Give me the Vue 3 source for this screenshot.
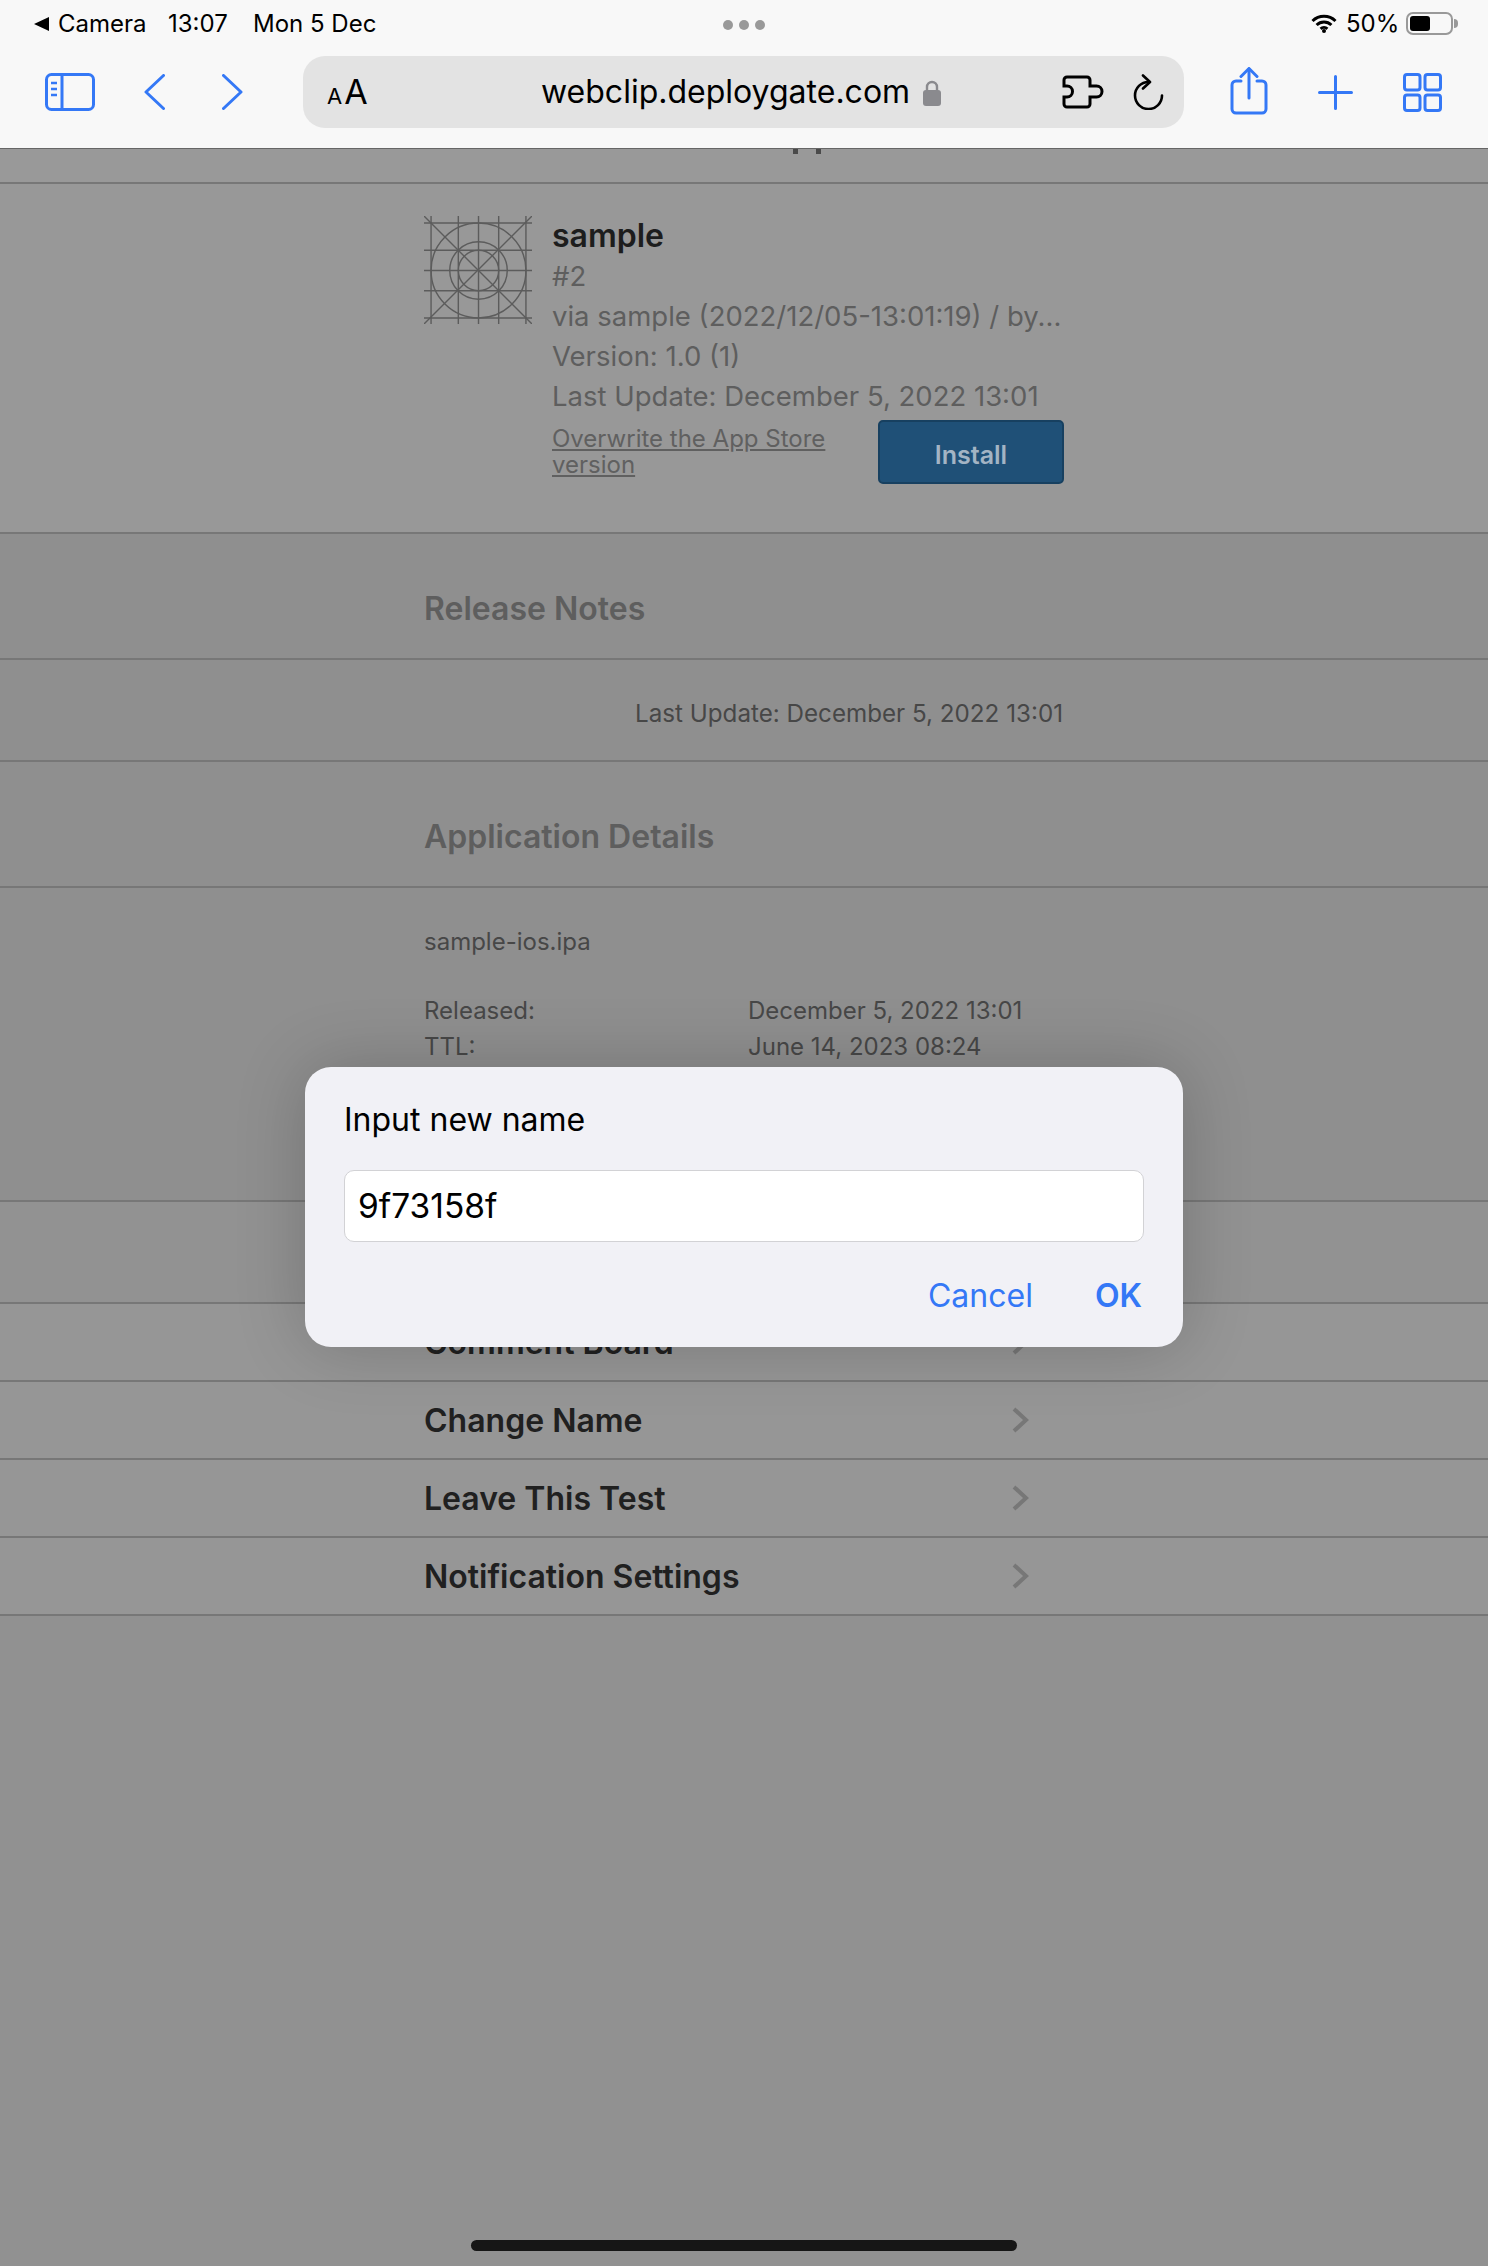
<script setup>
const rows = ['Comment Board', 'Change Name', 'Leave This Test', 'Notification Settings']
</script>

<template>
  <div class="screen">
    <header class="topbar">
      <div class="status">
        <span class="back-tri"></span>
        <span class="st camera">Camera</span>
        <span class="st time">13:07</span>
        <span class="st date">Mon 5 Dec</span>
        <span class="dots"><i></i><i></i><i></i></span>
        <svg class="wifi" viewBox="0 0 26 19" fill="none" stroke="#000" stroke-width="3">
          <path d="M1.5 7A16.5 16.5 0 0 1 24.5 7" />
          <path d="M5.6 11A10.6 10.6 0 0 1 20.4 11" />
          <path d="M9.6 14.8A5 5 0 0 1 16.4 14.8" />
          <circle cx="13" cy="17" r="2" fill="#000" stroke="none" />
        </svg>
        <span class="st pct">50%</span>
        <span class="battery"><span class="fill"></span></span>
        <span class="tip"></span>
      </div>
      <div class="tools">
        <svg class="ic-side" viewBox="0 0 50 38" fill="none" stroke="#3478f6" stroke-width="3">
          <rect x="1.5" y="1.5" width="47" height="35" rx="5" />
          <path d="M17 2V36" />
          <path d="M6 10H12M6 16H12M6 22H12" stroke-width="2.4" />
        </svg>
        <svg class="ic-back" viewBox="0 0 21 36" fill="none" stroke="#3478f6" stroke-width="3" stroke-linecap="round" stroke-linejoin="round">
          <path d="M19.5 1.5L2 18L19.5 34.5" />
        </svg>
        <svg class="ic-fwd" viewBox="0 0 21 36" fill="none" stroke="#3478f6" stroke-width="3" stroke-linecap="round" stroke-linejoin="round">
          <path d="M1.5 1.5L19 18L1.5 34.5" />
        </svg>
        <div class="url">
          <span class="aa"><small>A</small>A</span>
          <span class="host">webclip.deploygate.com</span>
          <svg class="lock" viewBox="0 0 18 26">
            <path d="M4 11V7a5 5 0 0 1 10 0v4" fill="none" stroke="#8a8a8e" stroke-width="2.4" />
            <rect x="0" y="10" width="18" height="16" rx="3" fill="#8a8a8e" />
          </svg>
          <svg class="puzzle" viewBox="0 0 42 34" fill="none" stroke="#000" stroke-width="3">
            <path d="M5 2H25a3 3 0 0 1 3 3v6h6.5a5.5 5.5 0 0 1 0 11H28v7a3 3 0 0 1-3 3H5a3 3 0 0 1-3-3v-7h3a5.5 5.5 0 0 0 0-11H2V5a3 3 0 0 1 3-3z" />
          </svg>
          <svg class="reload" viewBox="0 0 31 36" fill="none" stroke="#000" stroke-width="2.6" stroke-linecap="round" stroke-linejoin="round">
            <path d="M15.5 8A13.5 13.5 0 1 0 29 21.5" />
            <path d="M10 1.5L17 8L10 14.5" />
          </svg>
        </div>
        <svg class="ic-share" viewBox="0 0 38 48" fill="none" stroke="#3478f6" stroke-width="3" stroke-linecap="round" stroke-linejoin="round">
          <path d="M11 14H6a4 4 0 0 0-4 4v24a4 4 0 0 0 4 4h26a4 4 0 0 0 4-4V18a4 4 0 0 0-4-4h-5" />
          <path d="M19 31V2" />
          <path d="M11 9.5L19 1.5L27 9.5" />
        </svg>
        <svg class="ic-plus" viewBox="0 0 35 35" fill="none" stroke="#3478f6" stroke-width="3" stroke-linecap="round">
          <path d="M17.5 1.5V33.5M1.5 17.5H33.5" />
        </svg>
        <svg class="ic-tabs" viewBox="0 0 39 39" fill="none" stroke="#3478f6" stroke-width="3">
          <rect x="1.5" y="1.5" width="15.5" height="15.5" rx="2.5" />
          <rect x="22" y="1.5" width="15.5" height="15.5" rx="2.5" />
          <rect x="1.5" y="22" width="15.5" height="15.5" rx="2.5" />
          <rect x="22" y="22" width="15.5" height="15.5" rx="2.5" />
        </svg>
      </div>
    </header>

    <main>
      <div class="clipped"><i></i><i></i></div>

      <section class="app-row band-light">
        <div class="wrap app">
          <svg class="app-icon" viewBox="0 0 107 107" fill="none" stroke="#5c5c5c" stroke-width="1.4">
            <path d="M7 0V107M34 0V107M54 0V107M74 0V107M101 0V107" />
            <path d="M0 7H107M0 34H107M0 54H107M0 74H107M0 101H107" />
            <path d="M0 0L107 107M107 0L0 107" />
            <circle cx="54" cy="54" r="47" />
            <circle cx="54" cy="54" r="28.5" />
            <circle cx="54" cy="54" r="20" />
          </svg>
          <div class="info">
            <h2>sample</h2>
            <p>#2</p>
            <p>via sample (2022/12/05-13:01:19) / by...</p>
            <p>Version: 1.0 (1)</p>
            <p>Last Update: December 5, 2022 13:01</p>
            <div class="actions">
              <a class="overwrite">Overwrite the App Store version</a>
              <span class="install">Install</span>
            </div>
          </div>
        </div>
      </section>

      <section class="head-row">
        <div class="wrap"><h3>Release Notes</h3></div>
      </section>
      <section class="notes-row">
        <div class="wrap notes">Last Update: December 5, 2022 13:01</div>
      </section>
      <section class="head-row">
        <div class="wrap"><h3>Application Details</h3></div>
      </section>
      <section class="details-row">
        <div class="wrap">
          <div class="file">sample-ios.ipa</div>
          <dl>
            <dt>Released:</dt><dd>December 5, 2022 13:01</dd>
            <dt>TTL:</dt><dd>June 14, 2023 08:24</dd>
          </dl>
        </div>
      </section>
      <section class="blank-row"></section>
      <section v-for="r in rows" :key="r" class="link-row">
        <div class="wrap link">
          <span>{{ r }}</span>
          <svg class="chev" viewBox="0 0 17 26" fill="none" stroke="#777" stroke-width="4">
            <path d="M2 2L14 13L2 24" />
          </svg>
        </div>
      </section>
    </main>

    <div class="dialog">
      <div class="d-title">Input new name</div>
      <div class="d-input">9f73158f</div>
      <div class="d-btns">
        <span class="cancel">Cancel</span>
        <span class="ok">OK</span>
      </div>
    </div>

    <div class="home"></div>
  </div>
</template>

<style scoped>
.screen {
  position: relative;
  width: 1488px;
  height: 2266px;
  overflow: hidden;
  background: #919191;
  font-family: Inter, "Liberation Sans", sans-serif;
}
.topbar {
  height: 148px;
  background: #f8f8f8;
  border-bottom: 1px solid #666;
  box-sizing: content-box;
}
.status {
  height: 48px;
  display: flex;
  align-items: center;
  color: #000;
  position: relative;
}
.st { font-size: 24px; line-height: 48px; white-space: nowrap; }
.back-tri {
  margin-left: 34px;
  width: 0;
  height: 0;
  border-top: 7px solid transparent;
  border-bottom: 7px solid transparent;
  border-right: 15px solid #000;
}
.camera { margin-left: 9px; width: 110px; }
.time { width: 85px; }
.date { width: 150px; }
.dots {
  position: absolute;
  left: 723px;
  top: 20px;
  display: flex;
  gap: 6px;
}
.dots i { width: 10px; height: 10px; border-radius: 50%; background: #999; }
.wifi { position: absolute; left: 1311px; top: 14px; width: 26px; height: 19px; }
.pct { position: absolute; left: 1346px; top: 0; }
.battery {
  position: absolute;
  left: 1406px;
  top: 12px;
  width: 47px;
  height: 23px;
  box-sizing: border-box;
  border: 2px solid #999;
  border-radius: 7px;
  padding: 2px;
}
.fill { display: block; width: 20px; height: 100%; background: #000; border-radius: 3px; }
.tip {
  position: absolute;
  left: 1454px;
  top: 19px;
  width: 4px;
  height: 9px;
  background: #999;
  border-radius: 0 4px 4px 0;
}
.tools {
  height: 100px;
  display: flex;
  align-items: flex-start;
}
.ic-side { margin: 25px 0 0 45px; width: 50px; height: 38px; flex: none; }
.ic-back { margin: 26px 0 0 49px; width: 21px; height: 36px; flex: none; }
.ic-fwd { margin: 26px 0 0 57px; width: 21px; height: 36px; flex: none; }
.url {
  margin: 8px 0 0 60px;
  width: 881px;
  height: 72px;
  flex: none;
  background: #e3e3e3;
  border-radius: 22px;
  display: flex;
  align-items: center;
  position: relative;
  color: #000;
}
.aa { margin-left: 24px; padding-top: 3px; font-size: 34px; line-height: 69px; width: 214px; flex: none; }
.aa small { font-size: 22px; margin-right: 2px; }
.host { font-size: 32px; line-height: 72px; white-space: nowrap; width: 382px; flex: none; }
.lock { width: 18px; height: 26px; flex: none; margin-top: 2px; }
.puzzle { margin-left: 121px; width: 42px; height: 34px; flex: none; }
.reload { margin-left: 29px; width: 31px; height: 36px; flex: none; margin-top: -1px; }
.ic-share { margin: 19px 0 0 46px; width: 38px; height: 48px; flex: none; }
.ic-plus { margin: 27px 0 0 50px; width: 35px; height: 35px; flex: none; }
.ic-tabs { margin: 25px 0 0 50px; width: 39px; height: 39px; flex: none; }

main { display: block; }
.clipped {
  height: 33px;
  box-sizing: content-box;
  background: #999;
  border-bottom: 2px solid #777;
  display: flex;
  gap: 18px;
  padding-left: 793px;
  align-items: flex-start;
}
.clipped i { width: 5px; height: 5px; background: #4a4a4a; }
.wrap { width: 640px; margin: 0 auto; }
section { box-sizing: border-box; border-bottom: 2px solid #777; }
.app-row { height: 350px; background: #989898; padding-top: 31px; }
.app { display: flex; gap: 20px; margin-top: 0; }
.app-icon { width: 108px; height: 108px; flex: none; margin-top: 1px; }
.info { flex: 1; min-width: 0; }
.info h2 {
  margin: 0;
  font-size: 32px;
  font-weight: 600;
  line-height: 41px;
  color: #1d1d1d;
}
.info p {
  margin: 0;
  font-size: 27.5px;
  line-height: 40px;
  color: #5e5e5e;
  white-space: nowrap;
}
.actions { display: flex; justify-content: space-between; align-items: flex-start; margin-top: 4px; }
.overwrite {
  width: 290px;
  margin-top: 6px;
  font-size: 24px;
  line-height: 26px;
  color: #606060;
  text-decoration: underline;
}
.install {
  width: 186px;
  height: 64px;
  box-sizing: border-box;
  padding-top: 3px;
  background: #1f5077;
  border: 2px solid #174060;
  border-radius: 5px;
  color: #a3b4c4;
  font-size: 25px;
  font-weight: 600;
  line-height: 60px;
  text-align: center;
}
.head-row { height: 126px; background: #8f8f8f; padding-top: 54px; }
h3 {
  margin: 0;
  font-size: 32px;
  font-weight: 600;
  line-height: 42px;
  color: #5e5e5e;
}
.notes-row { height: 102px; background: #8f8f8f; padding-top: 39px; }
.notes { text-align: right; font-size: 24.2px; line-height: 30px; color: #474747; padding-right: 1px; box-sizing: border-box; }
.details-row { height: 314px; background: #8f8f8f; padding-top: 38px; }
.file { font-size: 24px; line-height: 32px; color: #474747; }
dl {
  margin: 35px 0 0;
  display: grid;
  grid-template-columns: 324px 1fr;
  font-size: 24px;
  line-height: 36px;
  color: #474747;
}
dd { margin: 0; }
.blank-row { height: 102px; background: #929292; }
.link-row { height: 78px; background: #969696; }
.link {
  height: 76px;
  display: flex;
  align-items: center;
  font-size: 32px;
  font-weight: 600;
  color: #202020;
}
.link span { width: 588px; }
.chev { width: 17px; height: 26px; flex: none; }

.dialog {
  position: absolute;
  left: 305px;
  top: 1067px;
  width: 878px;
  height: 280px;
  box-sizing: border-box;
  padding: 0 39px;
  background: #f1f1f6;
  border-radius: 26px;
  box-shadow: 0 0 70px rgba(0, 0, 0, 0.2);
}
.d-title { font-size: 32px; line-height: 40px; padding-top: 33px; color: #000; }
.d-input {
  margin-top: 30px;
  height: 72px;
  box-sizing: border-box;
  background: #fff;
  border: 1.5px solid #d2d2d5;
  border-radius: 10px;
  padding-left: 13px;
  font-size: 33.5px;
  line-height: 70px;
  color: #000;
}
.d-btns {
  margin-top: 34px;
  display: flex;
  justify-content: flex-end;
  gap: 62px;
  font-size: 32px;
  line-height: 40px;
  color: #3478f6;
  padding-right: 2px;
}
.ok { font-weight: 600; }
.home {
  position: absolute;
  left: 471px;
  top: 2240px;
  width: 546px;
  height: 11px;
  background: #161616;
  border-radius: 6px;
}
</style>
